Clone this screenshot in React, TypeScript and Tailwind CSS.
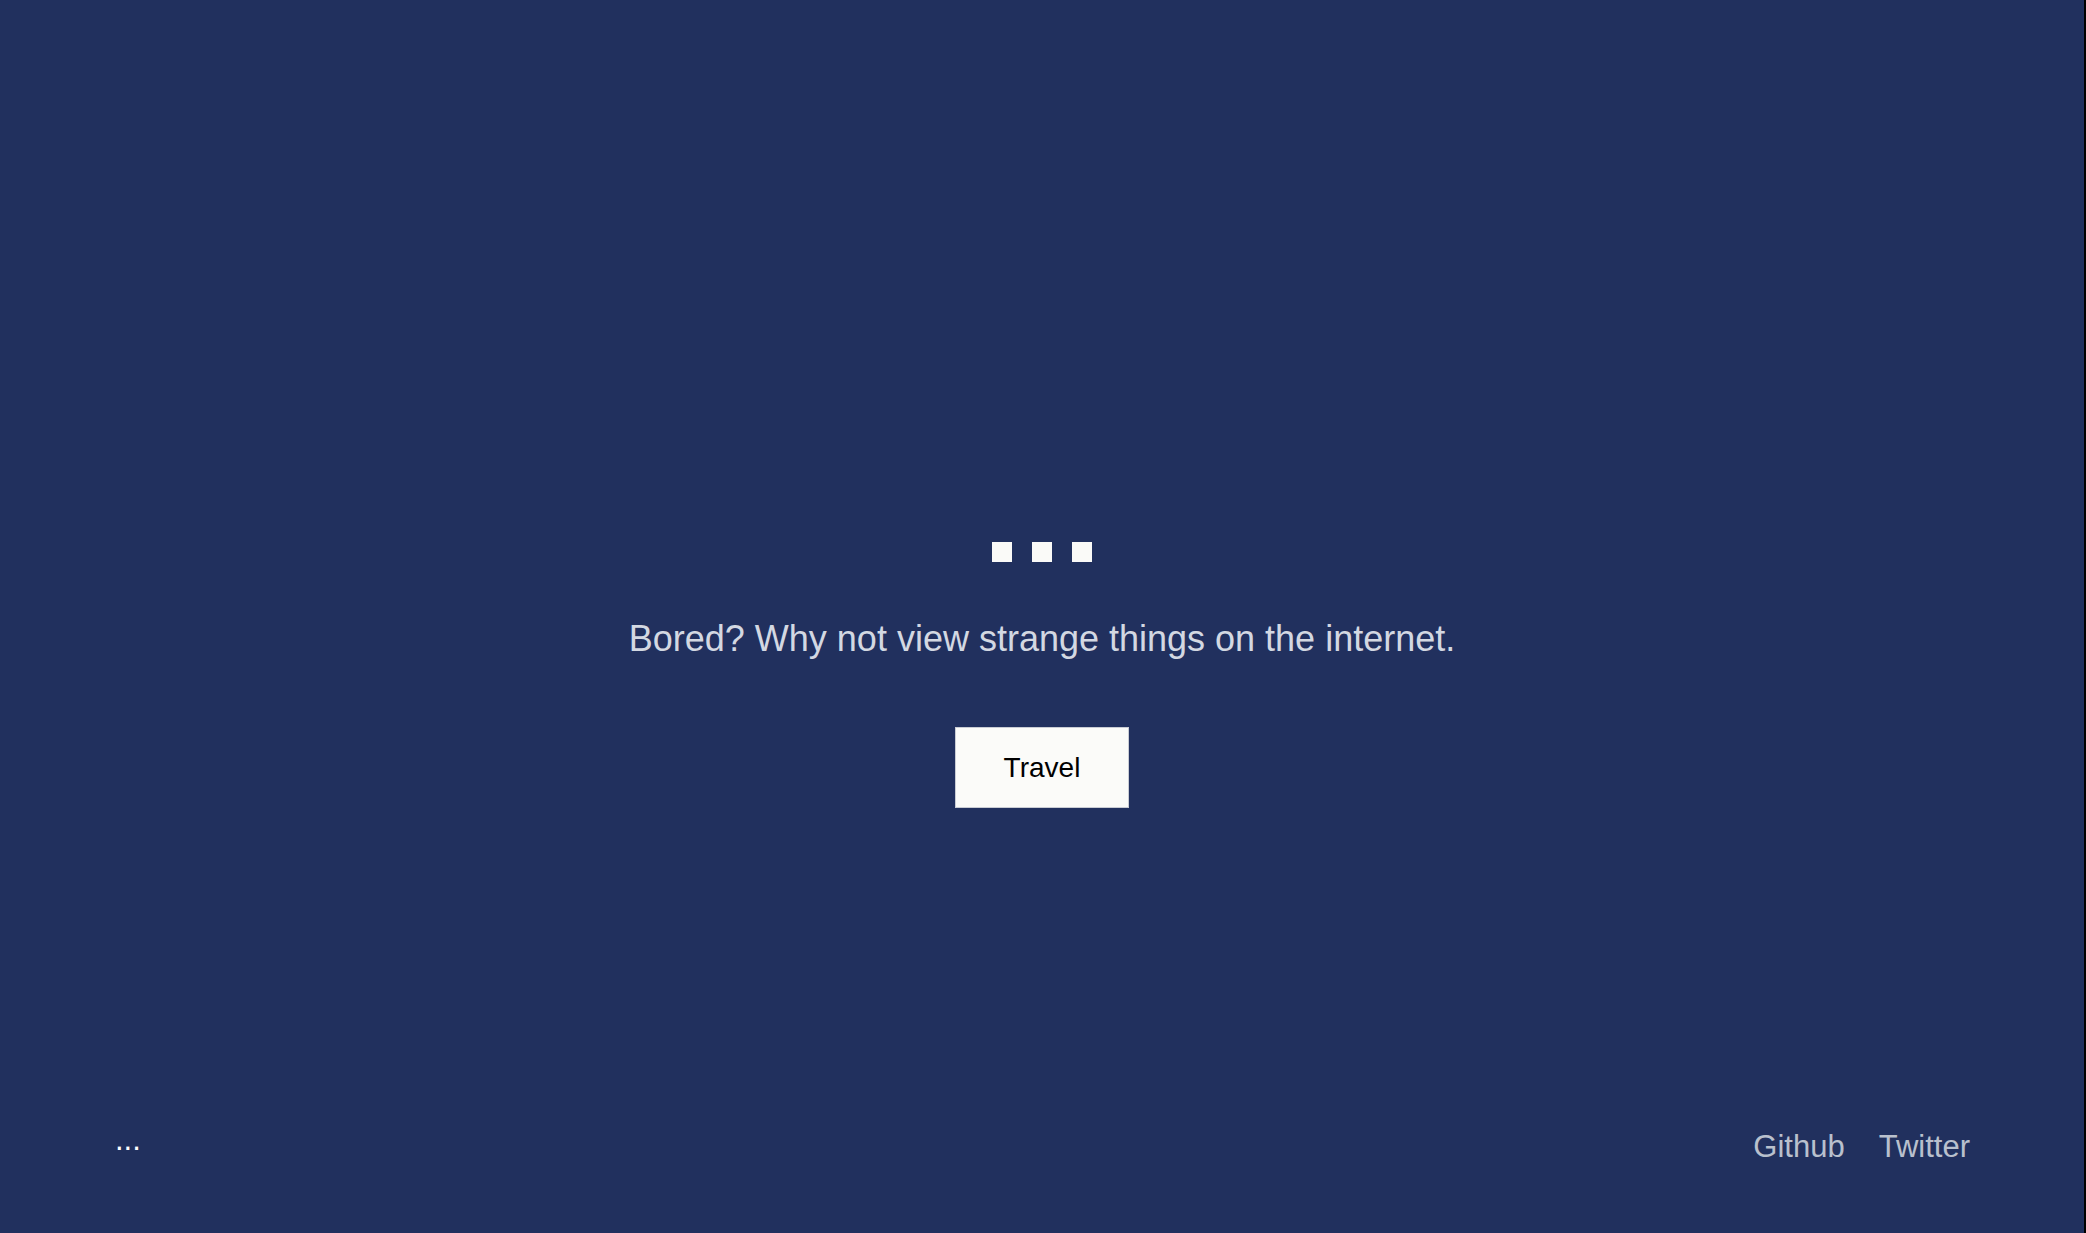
export default function App() {
  return (
    <div className="flex h-[1233px] w-full flex-col border-r-2 border-black bg-[#21305e] font-['Liberation_Sans',Arial,sans-serif]">
      {/* Main */}
      <main className="flex flex-1 flex-col items-center pt-[542px]">
        <div className="flex gap-5">
          <span className="h-5 w-5 bg-[#fafaf8]" />
          <span className="h-5 w-5 bg-[#fafaf8]" />
          <span className="h-5 w-5 bg-[#fafaf8]" />
        </div>
        <p className="mt-[56px] text-[36px] leading-[42px] text-[#d3d8e2]">
          Bored? Why not view strange things on the internet.
        </p>
        <button className="mt-[67px] h-[81px] w-[174px] border border-[#c9ccd4] bg-[#fbfbf9] text-[28px] text-black">
          Travel
        </button>
      </main>

      {/* Footer */}
      <footer className="flex items-center justify-between pl-[115px] pr-[114px] pb-[64px] text-[31px] leading-[30px]">
        <span className="pb-[14px] text-white">...</span>
        <nav className="flex gap-[34px] text-[#b9c0cd]">
          <a href="#">Github</a>
          <a href="#">Twitter</a>
        </nav>
      </footer>
    </div>
  );
}
